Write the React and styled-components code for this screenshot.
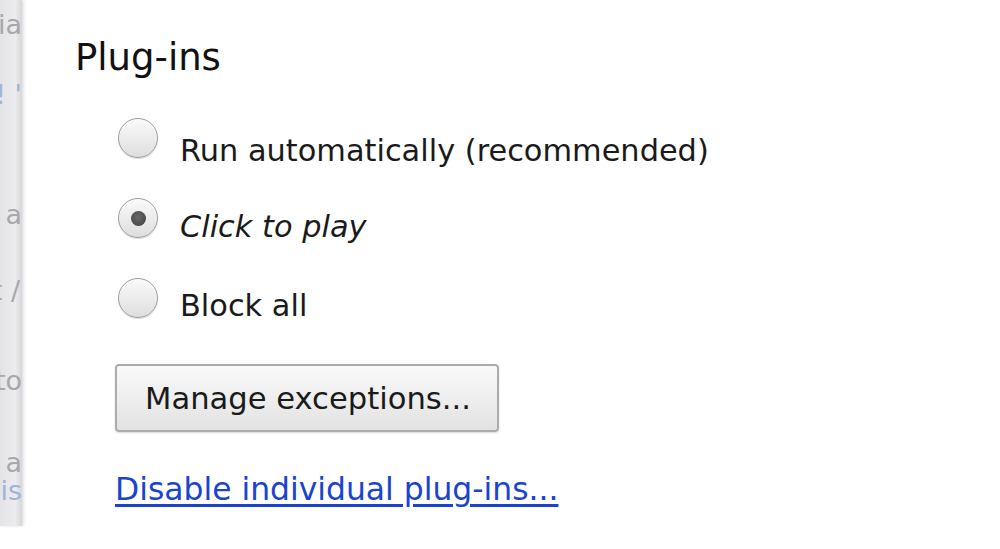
import React from "react";
import styled, { createGlobalStyle } from "styled-components";

const Global = createGlobalStyle`
  html, body {
    margin: 0;
    padding: 0;
    background: #ffffff;
  }
  body {
    font-family: "DejaVu Sans", "Liberation Sans", sans-serif;
    color: #1c1c1c;
  }
`

const Page = styled.div`
  display: flex;
  width: 1000px;
  height: 549px;
  overflow: hidden;
  background: #fff;
`

const Strip = styled.div`
  width: 22px;
  height: 526px;
  flex-shrink: 0;
  background: linear-gradient(to right, #e4e4e6 0%, #ececee 70%, #d6d6d8 100%);
  box-shadow: 2px 0 3px rgba(0, 0, 0, 0.12);
  overflow: hidden;
  display: flex;
  flex-direction: column;
  align-items: flex-end;
`

const Fragment = styled.div`
  margin-top: ${p => p.$gap}px;
  height: 26px;
  line-height: 26px;
  font-size: 27px;
  white-space: nowrap;
  color: ${p => (p.$blue ? "#9fb4d8" : "#a8a8ac")};
  margin-right: ${p => p.$shift || 0}px;
`

const Main = styled.div`
  flex: 1;
  padding: 36px 0 0 53px;
  display: flex;
  flex-direction: column;
  align-items: flex-start;
`

const Title = styled.h2`
  margin: 0;
  font-size: 37px;
  font-weight: normal;
  line-height: 44px;
  color: #111;
`

const Options = styled.div`
  margin: 38px 0 0 43px;
  display: flex;
  flex-direction: column;
`

const Row = styled.label`
  display: flex;
  align-items: flex-start;
  gap: 22px;
  height: 80px;
`

const Radio = styled.span`
  width: 38px;
  height: 38px;
  border-radius: 50%;
  border: 1px solid #9c9c9c;
  background: linear-gradient(to bottom, #fafafa, #dedede);
  box-shadow: inset 0 1px 1px #fff, 0 1px 1px rgba(0, 0, 0, 0.15);
  display: flex;
  align-items: center;
  justify-content: center;
  flex-shrink: 0;

  &::after {
    content: "";
    display: ${p => (p.$checked ? "block" : "none")};
    width: 15px;
    height: 15px;
    border-radius: 50%;
    background: radial-gradient(circle at 45% 40%, #6a6a6a, #3c3c3c);
  }
`

const Label = styled.span`
  margin-top: ${p => p.$offset}px;
  font-size: 30.4px;
  line-height: 40px;
  font-style: ${p => (p.$italic ? "italic" : "normal")};
  color: #1a1a1a;
  white-space: nowrap;
`

const Button = styled.button`
  margin: 6px 0 0 40px;
  width: 384px;
  height: 68px;
  padding: 0 0 0 28px;
  text-align: left;
  font-family: "DejaVu Sans", "Liberation Sans", sans-serif;
  font-size: 30.6px;
  color: #1a1a1a;
  border: 2px solid #acacac;
  border-radius: 4px;
  background: linear-gradient(to bottom, #f9f9f9 0%, #ededed 55%, #e2e2e2 100%);
  box-shadow: 0 1px 2px rgba(0, 0, 0, 0.15);
  cursor: pointer;
`

const Link = styled.a`
  margin: 37px 0 0 40px;
  font-size: 31.4px;
  line-height: 40px;
  color: #1a44d0;
  text-decoration: underline;
  text-underline-offset: 4px;
  cursor: pointer;
  white-space: nowrap;
`

const options = [
  { label: "Run automatically (recommended)", checked: false, offset: 13 },
  { label: "Click to play", checked: true, italic: true, offset: 9 },
  { label: "Block all", checked: false, offset: 8 },
]

const fragments = [
  { text: "ia", gap: 12 },
  { text: "! '", gap: 44, blue: true },
  { text: "a", gap: 94 },
  { text: "t /", gap: 50, shift: 2 },
  { text: "to", gap: 64 },
  { text: "a", gap: 56 },
  { text: "is", gap: 2, blue: true },
]

const App = () => {
  return (
    <Page>
      <Global />
      <Strip>
        {fragments.map((f, i) => (
          <Fragment key={i} $gap={f.gap} $blue={f.blue} $shift={f.shift}>
            {f.text}
          </Fragment>
        ))}
      </Strip>
      <Main>
        <Title>Plug-ins</Title>
        <Options>
          {options.map(o => (
            <Row key={o.label}>
              <Radio $checked={o.checked} />
              <Label $italic={o.italic} $offset={o.offset}>{o.label}</Label>
            </Row>
          ))}
        </Options>
        <Button>Manage exceptions...</Button>
        <Link>Disable individual plug-ins...</Link>
      </Main>
    </Page>
  )
}

export default App
